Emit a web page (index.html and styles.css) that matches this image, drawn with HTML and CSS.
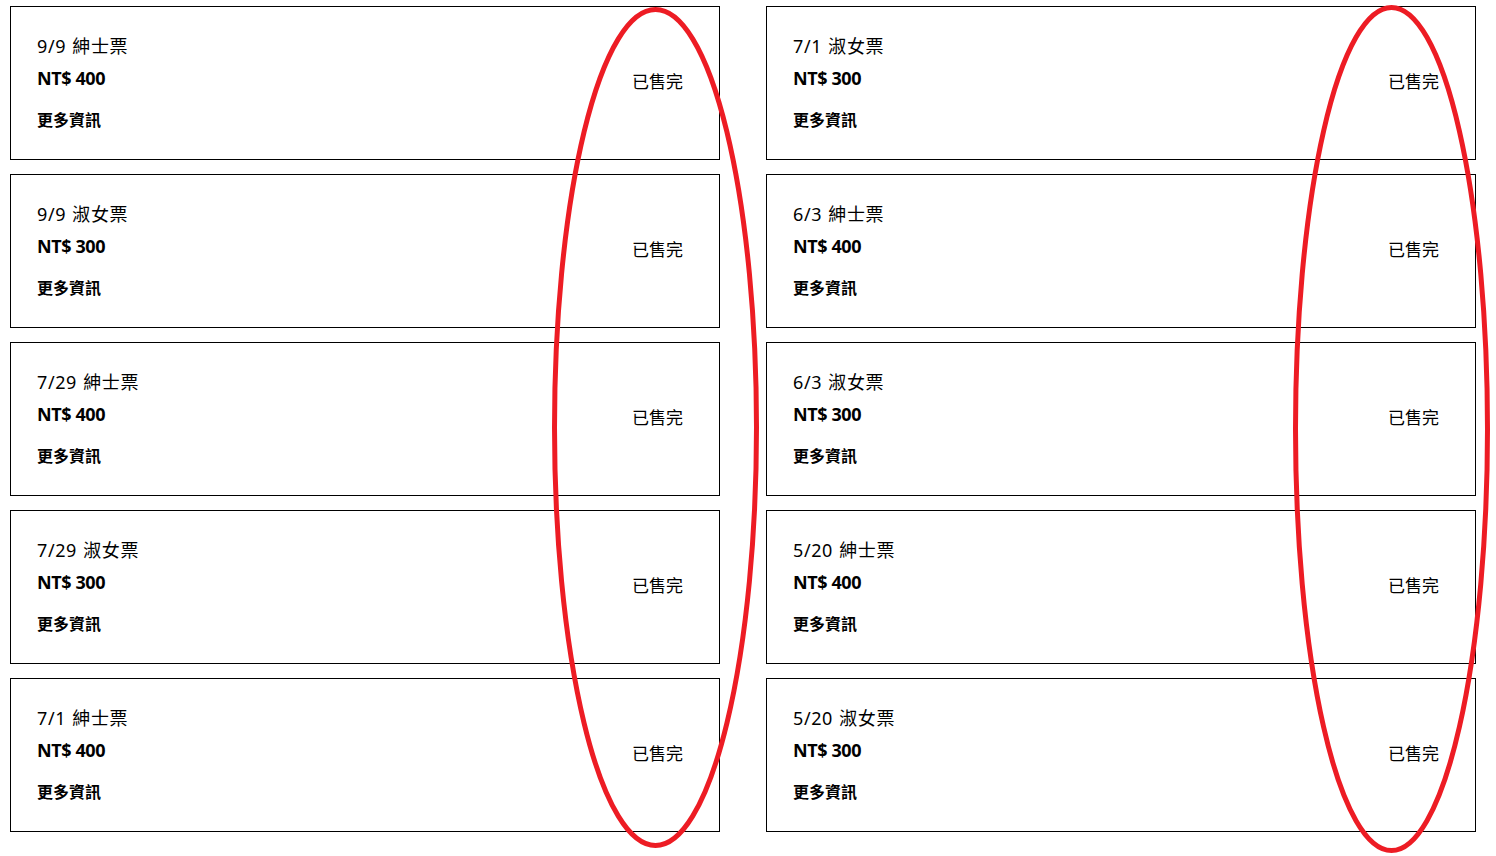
FILE: index.html
```html
<!DOCTYPE html>
<html lang="zh-Hant">
<head>
    <meta charset="UTF-8">
    <meta name="viewport" content="width=device-width, initial-scale=1.0">
    <title>票券列表</title>
    <link rel="stylesheet" href="styles.css">
</head>
<body>

<div class="ticket-list">
    <div class="ticket">
        <div class="ticket-info">
            <div class="ticket-name">9/9 紳士票</div>
            <div class="ticket-price">NT$ 400</div>
            <a class="ticket-more">更多資訊</a>
        </div>
        <span class="ticket-status">已售完</span>
    </div>
    <div class="ticket">
        <div class="ticket-info">
            <div class="ticket-name">9/9 淑女票</div>
            <div class="ticket-price">NT$ 300</div>
            <a class="ticket-more">更多資訊</a>
        </div>
        <span class="ticket-status">已售完</span>
    </div>
    <div class="ticket">
        <div class="ticket-info">
            <div class="ticket-name">7/29 紳士票</div>
            <div class="ticket-price">NT$ 400</div>
            <a class="ticket-more">更多資訊</a>
        </div>
        <span class="ticket-status">已售完</span>
    </div>
    <div class="ticket">
        <div class="ticket-info">
            <div class="ticket-name">7/29 淑女票</div>
            <div class="ticket-price">NT$ 300</div>
            <a class="ticket-more">更多資訊</a>
        </div>
        <span class="ticket-status">已售完</span>
    </div>
    <div class="ticket">
        <div class="ticket-info">
            <div class="ticket-name">7/1 紳士票</div>
            <div class="ticket-price">NT$ 400</div>
            <a class="ticket-more">更多資訊</a>
        </div>
        <span class="ticket-status">已售完</span>
    </div>
    <div class="ticket">
        <div class="ticket-info">
            <div class="ticket-name">7/1 淑女票</div>
            <div class="ticket-price">NT$ 300</div>
            <a class="ticket-more">更多資訊</a>
        </div>
        <span class="ticket-status">已售完</span>
    </div>
    <div class="ticket">
        <div class="ticket-info">
            <div class="ticket-name">6/3 紳士票</div>
            <div class="ticket-price">NT$ 400</div>
            <a class="ticket-more">更多資訊</a>
        </div>
        <span class="ticket-status">已售完</span>
    </div>
    <div class="ticket">
        <div class="ticket-info">
            <div class="ticket-name">6/3 淑女票</div>
            <div class="ticket-price">NT$ 300</div>
            <a class="ticket-more">更多資訊</a>
        </div>
        <span class="ticket-status">已售完</span>
    </div>
    <div class="ticket">
        <div class="ticket-info">
            <div class="ticket-name">5/20 紳士票</div>
            <div class="ticket-price">NT$ 400</div>
            <a class="ticket-more">更多資訊</a>
        </div>
        <span class="ticket-status">已售完</span>
    </div>
    <div class="ticket">
        <div class="ticket-info">
            <div class="ticket-name">5/20 淑女票</div>
            <div class="ticket-price">NT$ 300</div>
            <a class="ticket-more">更多資訊</a>
        </div>
        <span class="ticket-status">已售完</span>
    </div>
</div>

<!-- 標註：售完欄位圈起來 -->
<svg class="markup" width="1496" height="856" viewBox="0 0 1496 856">
    <ellipse cx="655.5" cy="427.5" rx="101" ry="418" fill="none" stroke="#ed1c24" stroke-width="5"/>
    <ellipse cx="1391.5" cy="429" rx="96" ry="421.5" fill="none" stroke="#ed1c24" stroke-width="5"/>
</svg>

</body>
</html>
```

FILE: styles.css
```css
body {
    margin: 0;
    padding: 6px 0 0 10px;
    font-family: "Noto Sans", "Noto Sans CJK TC", sans-serif;
    color: #000;
    background: #fff;
}
.ticket-list {
    display: grid;
    grid-template-columns: 710px 710px;
    grid-template-rows: repeat(5, auto);
    grid-auto-flow: column;
    gap: 14px 46px;
}
.ticket {
    display: flex;
    align-items: center;
    justify-content: space-between;
    border: 1px solid #000;
    padding: 26px 36px 28px 26px;
}
.ticket-info {
    display: flex;
    flex-direction: column;
    align-items: flex-start;
}
.ticket-name {
    font-size: 18px;
    line-height: 26px;
    letter-spacing: 0.6px;
    word-spacing: 1px;
}
.ticket-price {
    font-size: 18px;
    line-height: 26px;
    font-weight: bold;
    letter-spacing: -0.4px;
    margin-top: 6px;
}
.ticket-more {
    font-size: 16px;
    line-height: 22px;
    font-weight: bold;
    margin-top: 18px;
    cursor: pointer;
}
.ticket-status {
    font-size: 17px;
    line-height: 24px;
}
.markup {
    position: absolute;
    top: 0;
    left: 0;
    pointer-events: none;
}
```
